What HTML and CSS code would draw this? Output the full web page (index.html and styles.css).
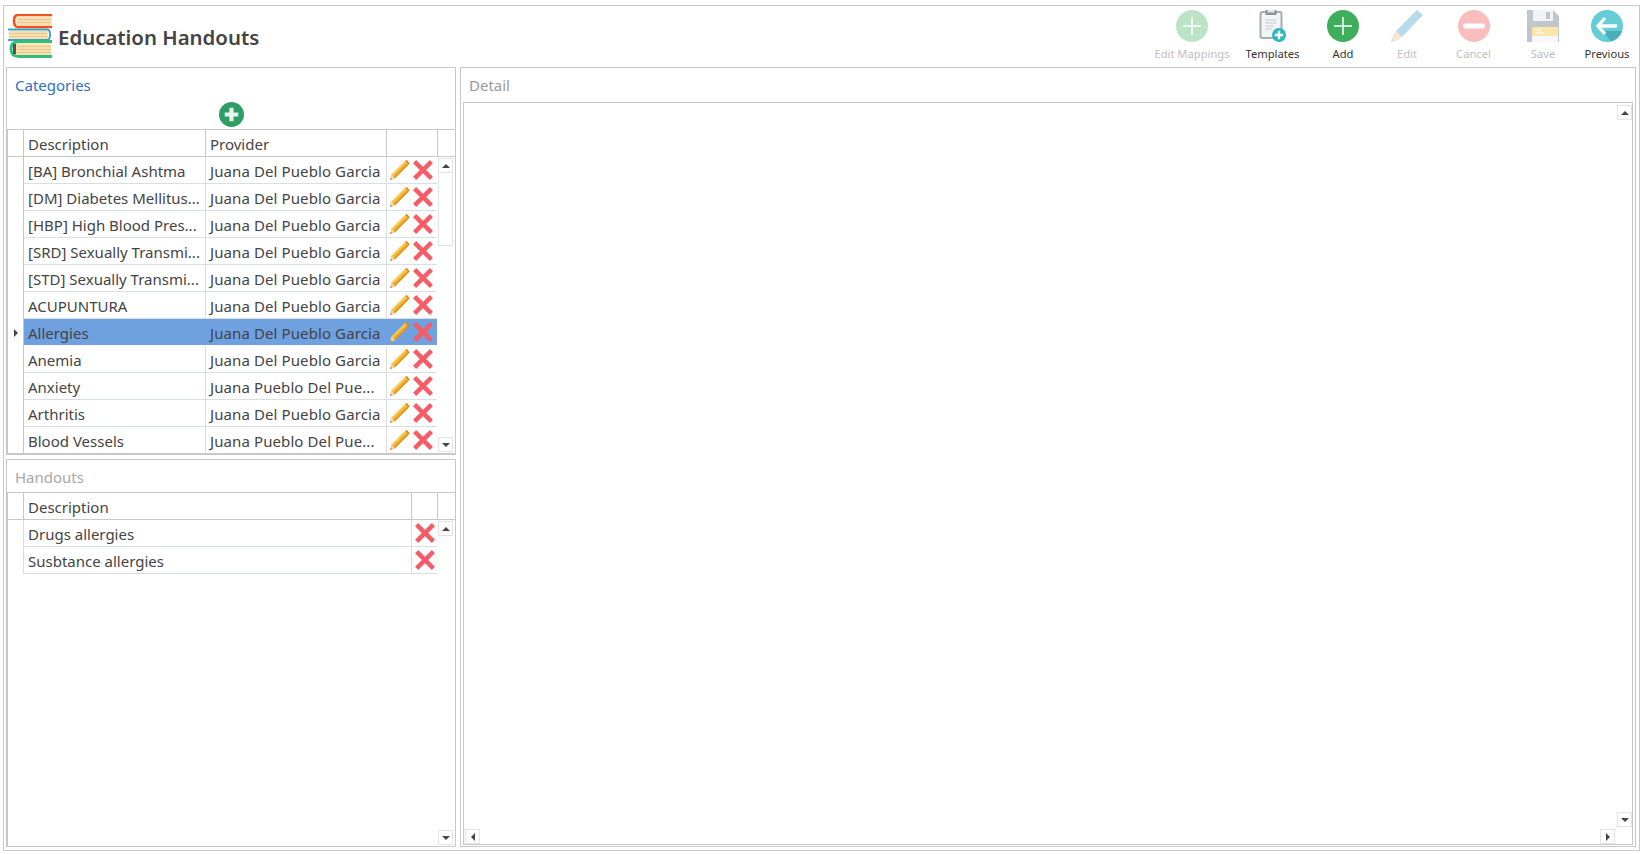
FILE: index.html
```html
<!DOCTYPE html>
<html lang="en">
<head>
<meta charset="utf-8">
<title>Education Handouts</title>
<link rel="stylesheet" href="styles.css">
</head>
<body>
<svg class="defs" aria-hidden="true">
  <symbol id="pencil" viewBox="0 0 21 22">
    <path d="M1 21 L2.6 15.6 L16.2 2 L19.6 5.4 L6 19.2 Z" fill="#f2b02c"/>
    <path d="M2.6 15.6 L16.2 2 L17.4 3.2 L3.8 16.8 Z" fill="#f8cb5c"/>
    <path d="M5 18.2 L18.6 4.4 L19.6 5.4 L6 19.2 Z" fill="#e0911a"/>
    <path d="M16.2 2 L17.4 0.8 L20.8 4.2 L19.6 5.4 Z" fill="#d98a1c"/>
    <path d="M1 21 L2.6 15.6 L6 19.2 Z" fill="#f3cfa6"/>
    <path d="M1 21 L1.7 18.7 L3.3 20.3 Z" fill="#b98a5a"/>
  </symbol>
  <symbol id="cross" viewBox="0 0 20 20">
    <path d="M1.6 1.6 L18.4 18.4 M18.4 1.6 L1.6 18.4" stroke="#f75c66" stroke-width="4.4" fill="none"/>
  </symbol>
</svg>

<div class="page">
  <header class="topbar">
    <div class="brand">
      <svg class="logo" viewBox="0 0 46 44">
        <path d="M44 1 H10 Q6 1 6 7 Q6 13 10 13 H44" fill="none" stroke="#f4511e" stroke-width="2.6"/>
        <rect x="8.5" y="3" width="35" height="8.5" fill="#f8dfb0"/>
        <path d="M10 5.5 H43 M10 8.5 H43" stroke="#e8c890" stroke-width="1"/>
        <path d="M0 15.5 H39 Q42 15.5 42 20.5 Q42 26 39 26 H0" fill="none" stroke="#3aa3c8" stroke-width="2"/>
        <rect x="1" y="17" width="39" height="8" fill="#f8dfb0"/>
        <path d="M1 19.5 H39 M1 22.5 H39" stroke="#e8c890" stroke-width="1"/>
        <path d="M44 27.5 H11 Q3 27.5 3 35 Q3 42.5 11 42.5 H44" fill="none" stroke="#2fbf77" stroke-width="2.8"/>
        <rect x="5" y="30" width="5" height="10" fill="#5a4a5c"/>
        <rect x="8" y="29.5" width="35" height="11.5" fill="#f8dfb0"/>
        <path d="M9 32.5 H43 M9 35.5 H43 M9 38.5 H43" stroke="#e8c890" stroke-width="1"/>
      </svg>
      <h1 class="title">Education Handouts</h1>
    </div>
    <nav class="toolbar">
      <div class="tool off">
        <svg class="tool-icon" viewBox="0 0 32 32"><circle cx="16" cy="16" r="16" fill="#bde3c6"/><path d="M16 7 V25 M7 16 H25" stroke="#fff" stroke-width="1.5"/></svg>
        <span class="tool-label">Edit Mappings</span>
      </div>
      <div class="tool">
        <svg class="tool-icon" viewBox="0 0 27 32">
          <rect x="1" y="2" width="21" height="26" rx="2" fill="#f2f5f6" stroke="#a9adb0" stroke-width="2"/>
          <rect x="6" y="0" width="11" height="5" fill="#8e9295"/>
          <rect x="8" y="0" width="7" height="2.5" fill="#e4e6e8"/>
          <path d="M6 10 H17 M6 13 H17 M6 16 H14 M6 19 H12" stroke="#c5c9cc" stroke-width="1.2"/>
          <circle cx="19.5" cy="25" r="7" fill="#2bb7c2"/>
          <path d="M19.5 20.8 V29.2 M15.3 25 H23.7" stroke="#fff" stroke-width="2.4"/>
        </svg>
        <span class="tool-label">Templates</span>
      </div>
      <div class="tool">
        <svg class="tool-icon" viewBox="0 0 32 32"><circle cx="16" cy="16" r="16" fill="#3fae5c"/><path d="M16 7 V25 M7 16 H25" stroke="#fff" stroke-width="1.5"/></svg>
        <span class="tool-label">Add</span>
      </div>
      <div class="tool off">
        <svg class="tool-icon" viewBox="0 0 32 32">
          <path d="M2 27 L5 21 L26 0 L32 5 L11 27 Z" fill="#b6dcea"/>
          <path d="M0 32 L2 25 L5 21 L11 27 L7 30 Z" fill="#f6e6da"/>
          <path d="M0 32 L1 28 L4 31 Z" fill="#d8e8d8"/>
        </svg>
        <span class="tool-label">Edit</span>
      </div>
      <div class="tool off">
        <svg class="tool-icon" viewBox="0 0 32 32"><circle cx="16" cy="16" r="16" fill="#f8bdbd"/><rect x="5" y="13.5" width="22" height="5" rx="2.5" fill="#fff"/></svg>
        <span class="tool-label">Cancel</span>
      </div>
      <div class="tool off">
        <svg class="tool-icon" viewBox="0 0 32 32">
          <path d="M0 0 H26 L32 6 V32 H0 Z" fill="#c1c6ce"/>
          <rect x="6" y="0" width="20" height="11" fill="#f2f3f5"/>
          <rect x="19" y="2" width="4" height="7" fill="#c1c6ce"/>
          <rect x="5" y="17" width="26" height="15" fill="#f6f7f8"/>
          <rect x="5" y="17" width="26" height="9" fill="#f9e6a8"/>
          <path d="M8 20 H14 M8 23 H18" stroke="#fff" stroke-width="1"/>
        </svg>
        <span class="tool-label">Save</span>
      </div>
      <div class="tool">
        <svg class="tool-icon" viewBox="0 0 32 32">
          <circle cx="16" cy="16" r="16" fill="#65cdd8"/>
          <path d="M12 21 H26 L31 21 A16 16 0 0 1 20 31.5 Z" fill="#4aaeb9"/>
          <path d="M14 8 L7 16 L14 24 M7 16 H26" fill="none" stroke="#fff" stroke-width="3.4"/>
        </svg>
        <span class="tool-label">Previous</span>
      </div>
    </nav>
  </header>

  <main class="content">
    <div class="left">
      <section class="panel categories">
        <h2 class="panel-title blue">Categories</h2>
        <div class="add-row">
          <svg class="add-icon" viewBox="0 0 24 24"><circle cx="12" cy="12" r="12" fill="#2f9e66"/><path d="M12 5.5 V18.5 M5.5 12 H18.5" stroke="#e6f4ec" stroke-width="4"/></svg>
        </div>
        <div class="grid">
          <div class="grid-head cat-head">
            <div class="hcell"></div>
            <div class="hcell">Description</div>
            <div class="hcell">Provider</div>
            <div class="hcell"></div>
            <div></div>
          </div>
          <div class="grid-body">
            <div class="indicator"></div>
            <div class="rows">
              <div class="row cat-row"><div class="cell">[BA] Bronchial Ashtma</div><div class="cell">Juana Del Pueblo Garcia</div><div class="acts"><svg class="ic-pencil"><use href="#pencil"/></svg><svg class="ic-cross"><use href="#cross"/></svg></div></div>
              <div class="row cat-row"><div class="cell">[DM] Diabetes Mellitus...</div><div class="cell">Juana Del Pueblo Garcia</div><div class="acts"><svg class="ic-pencil"><use href="#pencil"/></svg><svg class="ic-cross"><use href="#cross"/></svg></div></div>
              <div class="row cat-row"><div class="cell">[HBP] High Blood Pres...</div><div class="cell">Juana Del Pueblo Garcia</div><div class="acts"><svg class="ic-pencil"><use href="#pencil"/></svg><svg class="ic-cross"><use href="#cross"/></svg></div></div>
              <div class="row cat-row"><div class="cell">[SRD] Sexually Transmi...</div><div class="cell">Juana Del Pueblo Garcia</div><div class="acts"><svg class="ic-pencil"><use href="#pencil"/></svg><svg class="ic-cross"><use href="#cross"/></svg></div></div>
              <div class="row cat-row"><div class="cell">[STD] Sexually Transmi...</div><div class="cell">Juana Del Pueblo Garcia</div><div class="acts"><svg class="ic-pencil"><use href="#pencil"/></svg><svg class="ic-cross"><use href="#cross"/></svg></div></div>
              <div class="row cat-row"><div class="cell">ACUPUNTURA</div><div class="cell">Juana Del Pueblo Garcia</div><div class="acts"><svg class="ic-pencil"><use href="#pencil"/></svg><svg class="ic-cross"><use href="#cross"/></svg></div></div>
              <div class="row cat-row selected"><div class="cell">Allergies</div><div class="cell">Juana Del Pueblo Garcia</div><div class="acts"><svg class="ic-pencil"><use href="#pencil"/></svg><svg class="ic-cross"><use href="#cross"/></svg></div><span class="row-marker"></span></div>
              <div class="row cat-row"><div class="cell">Anemia</div><div class="cell">Juana Del Pueblo Garcia</div><div class="acts"><svg class="ic-pencil"><use href="#pencil"/></svg><svg class="ic-cross"><use href="#cross"/></svg></div></div>
              <div class="row cat-row"><div class="cell">Anxiety</div><div class="cell">Juana Pueblo Del Pue...</div><div class="acts"><svg class="ic-pencil"><use href="#pencil"/></svg><svg class="ic-cross"><use href="#cross"/></svg></div></div>
              <div class="row cat-row"><div class="cell">Arthritis</div><div class="cell">Juana Del Pueblo Garcia</div><div class="acts"><svg class="ic-pencil"><use href="#pencil"/></svg><svg class="ic-cross"><use href="#cross"/></svg></div></div>
              <div class="row cat-row last"><div class="cell">Blood Vessels</div><div class="cell">Juana Pueblo Del Pue...</div><div class="acts"><svg class="ic-pencil"><use href="#pencil"/></svg><svg class="ic-cross"><use href="#cross"/></svg></div></div>
            </div>
            <div class="vscroll">
              <div class="sbtn"><span class="tri up"></span></div>
              <div class="thumb"></div>
              <div class="sfill"></div>
              <div class="sbtn"><span class="tri down"></span></div>
            </div>
          </div>
        </div>
      </section>

      <section class="panel handouts">
        <h2 class="panel-title grey">Handouts</h2>
        <div class="grid">
          <div class="grid-head hand-head">
            <div class="hcell"></div>
            <div class="hcell">Description</div>
            <div class="hcell"></div>
            <div></div>
          </div>
          <div class="grid-body">
            <div class="indicator"></div>
            <div class="rows">
              <div class="row hand-row"><div class="cell">Drugs allergies</div><div class="acts"><svg class="ic-cross"><use href="#cross"/></svg></div></div>
              <div class="row hand-row"><div class="cell">Susbtance allergies</div><div class="acts"><svg class="ic-cross"><use href="#cross"/></svg></div></div>
            </div>
            <div class="vscroll hand-scroll">
              <div class="sbtn"><span class="tri up"></span></div>
              <div class="sfill"></div>
              <div class="sbtn"><span class="tri down"></span></div>
            </div>
          </div>
        </div>
      </section>
    </div>

    <section class="panel detail">
      <h2 class="panel-title grey-dark">Detail</h2>
      <div class="detail-frame">
        <div class="detail-v">
          <div class="sbtn"><span class="tri up"></span></div>
          <div class="sbtn"><span class="tri down"></span></div>
        </div>
        <div class="detail-h">
          <div class="sbtn"><span class="tri left"></span></div>
          <div class="sbtn"><span class="tri right"></span></div>
        </div>
      </div>
    </section>
  </main>
</div>
</body>
</html>
```

FILE: styles.css
```css
* { box-sizing: border-box; }
html, body { margin: 0; padding: 0; background: #fff; }
body {
  width: 1644px;
  height: 854px;
  padding: 5px 4px 3px 3px;
  font-family: "Noto Sans", "Open Sans", sans-serif;
  font-size: 15px;
  color: #444;
  overflow: hidden;
}
.defs { width: 0; height: 0; display: block; overflow: hidden; }

.page {
  width: 1637px;
  height: 846px;
  border: 1px solid #c8c8c8;
  padding: 0 3px 3px 2px;
  display: flex;
  flex-direction: column;
}

.topbar { height: 61px; display: flex; justify-content: space-between; }
.brand { display: flex; align-items: flex-start; padding: 8px 0 0 2px; }
.logo { width: 46px; height: 44px; flex: none; }
.title { margin: 8px 0 0 4px; font-size: 20.4px; font-weight: 600; color: #444; line-height: 30px; letter-spacing: 0; }

.toolbar { display: grid; grid-template-columns: 80px 81px 60px 68px 65px 74px 54px; height: 61px; margin-right: 2px; }
.tool { display: flex; flex-direction: column; align-items: center; padding-top: 4px; }
.tool-icon { width: 32px; height: 32px; flex: none; }
.tool-label { margin-top: 3px; font-size: 11.2px; line-height: 18px; color: #333; white-space: nowrap; }
.tool.off .tool-label { color: #c0c0c0; }

.content { flex: 1; display: flex; gap: 4px; min-height: 0; }
.left { width: 450px; display: flex; flex-direction: column; gap: 4px; }

.panel { border: 1px solid #c8c8c8; display: flex; flex-direction: column; min-height: 0; }
.categories { height: 388px; }
.handouts { flex: 1; }
.detail { flex: 1; }

.panel-title { margin: 0; height: 34px; padding: 0 0 0 8px; font-size: 15px; font-weight: 400; line-height: 34px; }
.blue { color: #2e6fc4; }
.grey { color: #a8a8a8; height: 32px; line-height: 34px; }
.grey-dark { color: #9a9a9a; padding-left: 8px; }

.add-row { height: 27px; display: flex; justify-content: center; }
.add-icon { width: 25px; height: 25px; }

.grid {
  flex: 1;
  min-height: 0;
  display: flex;
  flex-direction: column;
  border-top: 1px solid #c8c8c8;
  border-bottom: 1px solid #c8c8c8;
  border-left: 1px solid #c8c8c8;
}
.categories .grid { border-bottom-width: 2px; margin-bottom: -1px; }
.handouts .grid { margin-bottom: -1px; }

.grid-head { height: 27px; flex: none; display: grid; grid-template-rows: 26px; border-bottom: 1px solid #c8c8c8; }
.cat-head { grid-template-columns: 16px 182px 181px 51px 1fr; }
.hand-head { grid-template-columns: 16px 388px 26px 1fr; }
.hcell { border-right: 1px solid #c8c8c8; padding-left: 4px; line-height: 28px; white-space: nowrap; overflow: hidden; }

.grid-body { flex: 1; min-height: 0; display: flex; overflow: hidden; }
.indicator { width: 16px; flex: none; border-right: 1px solid #c8c8c8; }
.handouts .indicator { height: 54px; border-right-color: #d9dee3; }
.rows { width: 413px; flex: none; }
.row { position: relative; height: 27px; display: grid; grid-template-rows: 26px; border-bottom: 1px solid #d9dee3; }
.row.last { border-bottom: 0; height: 26px; }
.cat-row { grid-template-columns: 182px 181px 1fr; }
.hand-row { grid-template-columns: 388px 1fr; }
.cell { border-right: 1px solid #d9dee3; padding-left: 4px; line-height: 28px; white-space: nowrap; overflow: hidden; }
.cat-row .cell:nth-child(2) { letter-spacing: 0.1px; }
.acts { display: flex; align-items: flex-start; padding: 3px 0 0 2px; gap: 3px; }
.hand-row .acts { padding-left: 3px; }
.ic-pencil { width: 21px; height: 22px; flex: none; margin-top: -1px; }
.ic-cross { width: 20px; height: 20px; flex: none; }

.selected { background: #6fa0e0; border-bottom-color: #fff; }
.selected .cell { border-right-color: transparent; }
.row-marker {
  position: absolute;
  left: -10px;
  top: 10px;
  border-left: 4px solid #444;
  border-top: 4px solid transparent;
  border-bottom: 4px solid transparent;
}

.vscroll { flex: 1; display: flex; flex-direction: column; padding: 1px 3px 1px 1px; }
.hand-scroll { padding: 1px 3px 1px 1px; }
.sbtn {
  width: 15px;
  height: 15px;
  flex: none;
  border: 1px solid #e4e4e4;
  display: flex;
  align-items: center;
  justify-content: center;
}
.thumb { height: 73px; flex: none; border: 1px solid #e4e4e4; border-top: 0; }
.sfill { flex: 1; }

.tri { width: 0; height: 0; display: block; }
.tri.up { border-left: 4px solid transparent; border-right: 4px solid transparent; border-bottom: 4px solid #444; }
.tri.down { border-left: 4px solid transparent; border-right: 4px solid transparent; border-top: 4px solid #444; }
.tri.left { border-top: 4px solid transparent; border-bottom: 4px solid transparent; border-right: 4px solid #444; }
.tri.right { border-top: 4px solid transparent; border-bottom: 4px solid transparent; border-left: 4px solid #444; }

.detail-frame {
  flex: 1;
  position: relative;
  margin: 0 2px 1px 2px;
  border: 1px solid #c8c8c8;
}
.detail-v {
  position: absolute;
  top: 2px;
  bottom: 17px;
  right: 0;
  display: flex;
  flex-direction: column;
  justify-content: space-between;
}
.detail-h {
  position: absolute;
  left: 1px;
  right: 17px;
  bottom: 0;
  display: flex;
  justify-content: space-between;
}
```
